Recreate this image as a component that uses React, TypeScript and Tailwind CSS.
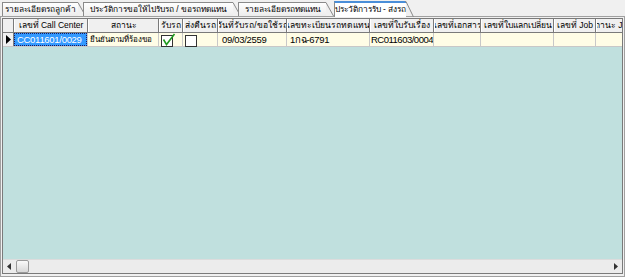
import React from "react";

const cols = [
  { label: "เลขที่ Call Center", w: 74 },
  { label: "สถานะ", w: 71 },
  { label: "รับรถ", w: 24 },
  { label: "ส่งคืนรถ", w: 35 },
  { label: "วันที่รับรถ/ขอใช้รถ", w: 69 },
  { label: "เลขทะเบียนรถทดแทน", w: 83 },
  { label: "เลขที่ใบรับเรื่อง", w: 64 },
  { label: "เลขที่เอกสาร", w: 47 },
  { label: "เลขที่ใบแลกเปลี่ยน", w: 73 },
  { label: "เลขที่ Job", w: 42 },
  { label: "สถานะ Job", w: 30 },
];

const tabs = [
  { label: "รายละเอียดรถลูกค้า", w: 76 },
  { label: "ประวัติการขอให้ไปรับรถ / ขอรถทดแทน", w: 150 },
  { label: "รายละเอียดรถทดแทน", w: 88 },
];

function Slant({ h = 16 }: { h?: number }) {
  return (
    <svg width="9" height={h} className="shrink-0 -ml-[1px]">
      <path d={`M0 0.5 L1 0.5 L8.5 ${h}`} stroke="#8a8a8a" fill="none" />
    </svg>
  );
}

function CheckBox({ checked }: { checked?: boolean }) {
  return (
    <svg width="16" height="14" viewBox="0 0 16 14">
      <rect x="0.5" y="2.5" width="11" height="11" fill="#fff" stroke="#333" />
      {checked && <path d="M2.5 6.5 L5.5 11.5 L13.5 1" stroke="#1f9a1f" strokeWidth="1.6" fill="none" />}
    </svg>
  );
}

export default function App() {
  return (
    <div
      className="w-[625px] h-[277px] bg-[#f0f0f0] overflow-hidden text-[9.5px] tracking-[-0.3px] leading-none text-black flex flex-col"
      style={{ fontFamily: '"Liberation Sans", "Noto Sans", "DejaVu Sans", sans-serif' }}
    >
      {/* Tabs */}
      <div className="h-[16px] flex items-end pl-[2px] shrink-0 text-[8.3px] tracking-normal">
        {tabs.map((t) => (
          <div key={t.label} className="flex h-[14px] -mr-[3px]">
            <div
              className="flex items-center justify-center border-l border-t border-[#8a8a8a] bg-gradient-to-b from-white to-[#ececec] whitespace-nowrap"
              style={{ width: t.w }}
            >
              {t.label}
            </div>
            <Slant h={14} />
          </div>
        ))}
        <div className="flex h-[16px] ml-[3px] relative z-10 top-[1px]">
          <div className="w-[72px] flex items-center justify-center border-l border-t-2 border-l-[#8a8a8a] border-t-[#4a8ed8] bg-white whitespace-nowrap pb-[1px]">
            ประวัติการรับ - ส่งรถ
          </div>
          <Slant h={16} />
        </div>
      </div>

      {/* Panel */}
      <div className="flex-1 border border-[#a0a0a0] bg-[#f0f0f0] p-[1px] pb-[2px] flex flex-col">
        <div className="flex-1 flex flex-col border border-[#7a7a7a] bg-[#c0e0de] overflow-hidden">
          {/* Header */}
          <div className="flex h-[14px] shrink-0 bg-[#f0f0f0] border-b border-[#7a7a7a] text-[8.5px] tracking-normal">
            <div className="w-[11px] shrink-0 border-r border-[#7a7a7a]" />
            {cols.map((c) => (
              <div
                key={c.label}
                className="shrink-0 flex items-center justify-center border-r border-[#7a7a7a] border-l border-l-white whitespace-nowrap overflow-hidden"
                style={{ width: c.w }}
              >
                {c.label}
              </div>
            ))}
          </div>
          {/* Data row */}
          <div className="flex h-[14px] shrink-0 bg-[#fffde6] border-b border-[#c8c8c8]">
            <div className="w-[11px] shrink-0 bg-[#f0f0f0] border-r border-[#7a7a7a] flex items-center justify-center">
              <svg width="5" height="9" viewBox="0 0 5 9">
                <path d="M0 0 L5 4.5 L0 9 Z" fill="#000" />
              </svg>
            </div>
            <div className="w-[74px] shrink-0 border-r border-[#c8c8c8]">
              <div className="h-full bg-[#3399ff] text-white flex items-center pl-[2px] border border-dotted border-[#1a1a60] whitespace-nowrap overflow-hidden">
                CC011601/0029
              </div>
            </div>
            <div className="w-[71px] shrink-0 flex items-center pl-[2px] border-r border-[#c8c8c8] whitespace-nowrap overflow-hidden text-[8px] tracking-normal">
              ยืนยันตามที่ร้องขอ
            </div>
            <div className="w-[24px] shrink-0 flex items-center pl-[2px] border-r border-[#c8c8c8]">
              <CheckBox checked />
            </div>
            <div className="w-[35px] shrink-0 flex items-center pl-[2px] border-r border-[#c8c8c8]">
              <CheckBox />
            </div>
            <div className="w-[69px] shrink-0 flex items-center pl-[4px] border-r border-[#c8c8c8]">09/03/2559</div>
            <div className="w-[83px] shrink-0 flex items-center pl-[3px] border-r border-[#c8c8c8]">1กฉ-6791</div>
            <div className="w-[64px] shrink-0 flex items-center pl-[1px] border-r border-[#c8c8c8] whitespace-nowrap overflow-hidden tracking-[-0.5px]">RC011603/0004</div>
            <div className="w-[47px] shrink-0 border-r border-[#c8c8c8]" />
            <div className="w-[73px] shrink-0 border-r border-[#c8c8c8]" />
            <div className="w-[42px] shrink-0 border-r border-[#c8c8c8]" />
            <div className="w-[30px] shrink-0" />
          </div>
          <div className="flex-1" />
          {/* Scrollbar */}
          <div className="h-[14px] shrink-0 bg-[#ececec] border-t border-[#dcdcdc] flex items-center px-[4px]">
            <svg width="4" height="7" viewBox="0 0 4 7">
              <path d="M4 0 L0 3.5 L4 7 Z" fill="#333" />
            </svg>
            <div className="ml-[5px] w-[13px] h-[13px] rounded-[2px] border border-[#9a9a9a] bg-gradient-to-b from-[#fafafa] to-[#d8d8d8]" />
            <div className="flex-1" />
            <svg width="4" height="7" viewBox="0 0 4 7">
              <path d="M0 0 L4 3.5 L0 7 Z" fill="#333" />
            </svg>
          </div>
        </div>
      </div>
    </div>
  );
}
